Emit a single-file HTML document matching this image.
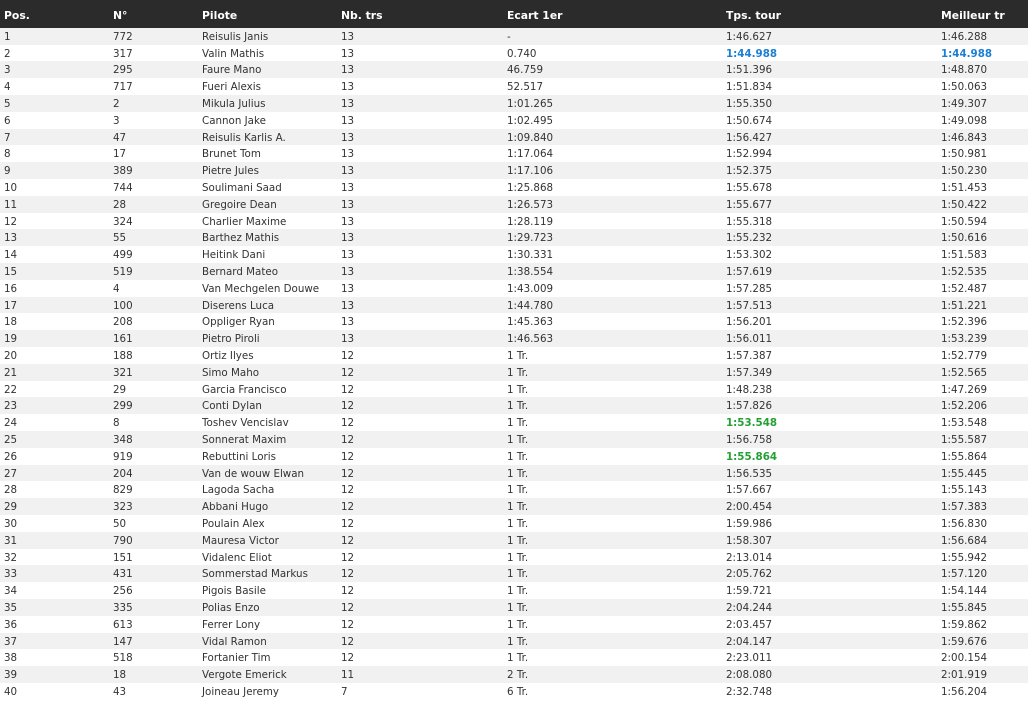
<!DOCTYPE html>
<html><head><meta charset="utf-8"><style>
body{margin:0;width:1028px;height:701px;background:#fff;overflow:hidden;font-family:"DejaVu Sans","Liberation Sans",sans-serif;font-size:10.3px;color:#333}
.h{position:absolute;left:0;top:0;width:1028px;height:27.5px;background:#2b2b2b;color:#fff;font-weight:bold;font-size:10.8px}
.r{position:absolute;left:0;width:1028px;height:16.8px;line-height:18px}
.h span{position:absolute;top:8.5px}
.r span{position:absolute;top:0}
.c1{left:4px}.c2{left:113px}.c3{left:202px}.c4{left:341px}.c5{left:507px}.c6{left:726px}.c7{left:941px}
.b{color:#1a7fd4;font-weight:bold}.g{color:#23a033;font-weight:bold}
</style></head><body>
<div class="h"><span class="c1">Pos.</span><span class="c2">N°</span><span class="c3">Pilote</span><span class="c4">Nb. trs</span><span class="c5">Ecart 1er</span><span class="c6">Tps. tour</span><span class="c7">Meilleur tr</span></div>
<div id="t"></div>
<script>
var d=[
["772","Reisulis Janis","13","-","1:46.627","1:46.288"],
["317","Valin Mathis","13","0.740","b1:44.988","b1:44.988"],
["295","Faure Mano","13","46.759","1:51.396","1:48.870"],
["717","Fueri Alexis","13","52.517","1:51.834","1:50.063"],
["2","Mikula Julius","13","1:01.265","1:55.350","1:49.307"],
["3","Cannon Jake","13","1:02.495","1:50.674","1:49.098"],
["47","Reisulis Karlis A.","13","1:09.840","1:56.427","1:46.843"],
["17","Brunet Tom","13","1:17.064","1:52.994","1:50.981"],
["389","Pietre Jules","13","1:17.106","1:52.375","1:50.230"],
["744","Soulimani Saad","13","1:25.868","1:55.678","1:51.453"],
["28","Gregoire Dean","13","1:26.573","1:55.677","1:50.422"],
["324","Charlier Maxime","13","1:28.119","1:55.318","1:50.594"],
["55","Barthez Mathis","13","1:29.723","1:55.232","1:50.616"],
["499","Heitink Dani","13","1:30.331","1:53.302","1:51.583"],
["519","Bernard Mateo","13","1:38.554","1:57.619","1:52.535"],
["4","Van Mechgelen Douwe","13","1:43.009","1:57.285","1:52.487"],
["100","Diserens Luca","13","1:44.780","1:57.513","1:51.221"],
["208","Oppliger Ryan","13","1:45.363","1:56.201","1:52.396"],
["161","Pietro Piroli","13","1:46.563","1:56.011","1:53.239"],
["188","Ortiz Ilyes","12","1 Tr.","1:57.387","1:52.779"],
["321","Simo Maho","12","1 Tr.","1:57.349","1:52.565"],
["29","Garcia Francisco","12","1 Tr.","1:48.238","1:47.269"],
["299","Conti Dylan","12","1 Tr.","1:57.826","1:52.206"],
["8","Toshev Vencislav","12","1 Tr.","g1:53.548","1:53.548"],
["348","Sonnerat Maxim","12","1 Tr.","1:56.758","1:55.587"],
["919","Rebuttini Loris","12","1 Tr.","g1:55.864","1:55.864"],
["204","Van de wouw Elwan","12","1 Tr.","1:56.535","1:55.445"],
["829","Lagoda Sacha","12","1 Tr.","1:57.667","1:55.143"],
["323","Abbani Hugo","12","1 Tr.","2:00.454","1:57.383"],
["50","Poulain Alex","12","1 Tr.","1:59.986","1:56.830"],
["790","Mauresa Victor","12","1 Tr.","1:58.307","1:56.684"],
["151","Vidalenc Eliot","12","1 Tr.","2:13.014","1:55.942"],
["431","Sommerstad Markus","12","1 Tr.","2:05.762","1:57.120"],
["256","Pigois Basile","12","1 Tr.","1:59.721","1:54.144"],
["335","Polias Enzo","12","1 Tr.","2:04.244","1:55.845"],
["613","Ferrer Lony","12","1 Tr.","2:03.457","1:59.862"],
["147","Vidal Ramon","12","1 Tr.","2:04.147","1:59.676"],
["518","Fortanier Tim","12","1 Tr.","2:23.011","2:00.154"],
["18","Vergote Emerick","11","2 Tr.","2:08.080","2:01.919"],
["43","Joineau Jeremy","7","6 Tr.","2:32.748","1:56.204"]];
var h="";
function f(v){if(v[0]=="b")return '<b class="b">'+v.slice(1)+'</b>';if(v[0]=="g")return '<b class="g">'+v.slice(1)+'</b>';return v;}
d.forEach(function(r,i){h+='<div class="r" style="top:'+(27.8+i*16.8)+'px;background:'+(i%2==0?'#f1f1f1':'#fff')+'"><span class="c1">'+(i+1)+'</span><span class="c2">'+r[0]+'</span><span class="c3">'+r[1]+'</span><span class="c4">'+r[2]+'</span><span class="c5">'+r[3]+'</span><span class="c6">'+f(r[4])+'</span><span class="c7">'+f(r[5])+'</span></div>';});
document.getElementById("t").innerHTML=h;
</script>
</body></html>
